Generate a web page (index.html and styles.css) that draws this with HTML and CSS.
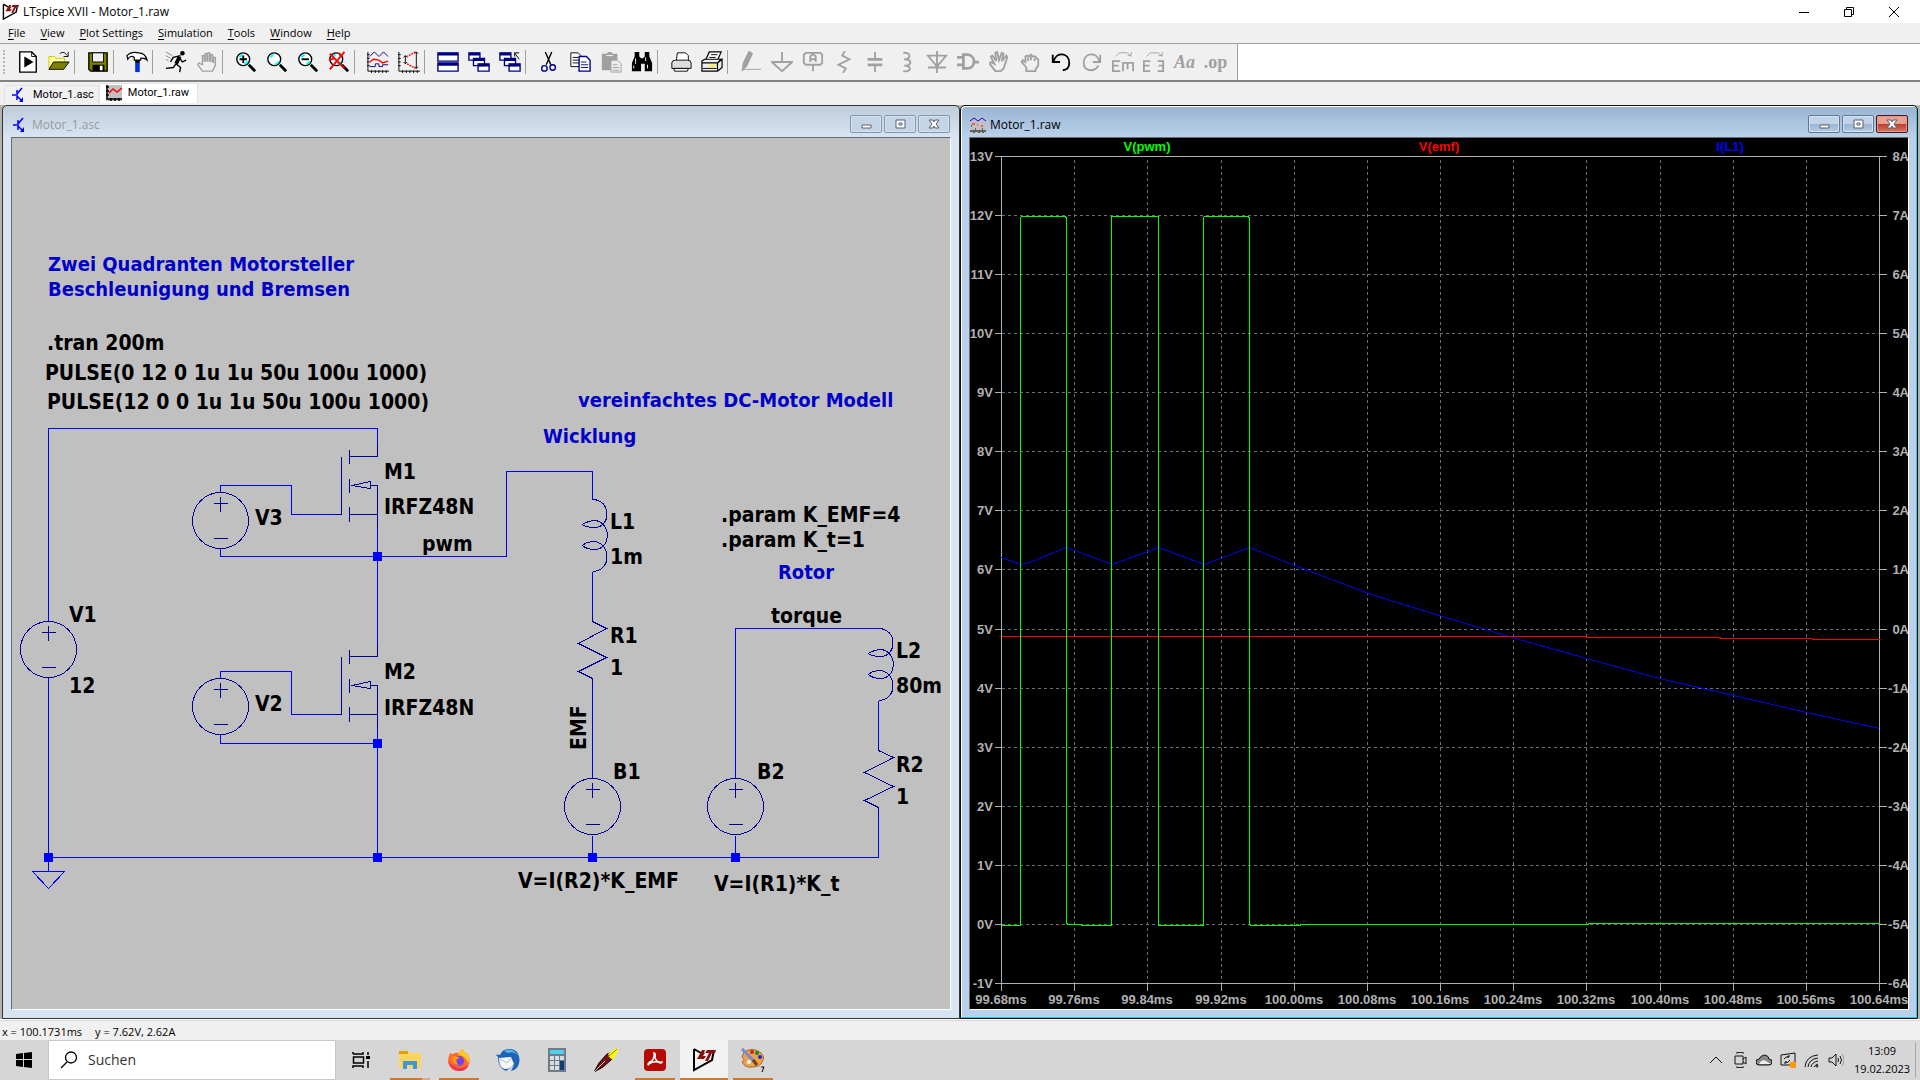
FILE: index.html
```html
<!DOCTYPE html>
<html lang="de">
<head>
<meta charset="utf-8">
<title>LTspice XVII - Motor_1.raw</title>
<link rel="stylesheet" href="styles.css">
</head>
<body>
<svg class="defs" aria-hidden="true">
  <defs>
    <symbol id="lt" viewBox="0 0 24 24"><path d="M2 1v21L20 12l2-10M2 1l7 4" fill="none" stroke="#000" stroke-width="2"/><path d="M10 2 5 11h7l2-3h-3l4-6zM13 2h11l-1 3h-3l-4 8h-3l4-8h-5z" fill="#8b1010"/></symbol>
    <symbol id="npn" viewBox="0 0 16 16"><path d="M1 8h4M6 3v10M6 7l5-6M6 9l5 5" fill="none" stroke="#00f" stroke-width="1.500"/><path d="M12 10v5H8z" fill="#00f"/></symbol>
    <symbol id="wave" viewBox="0 0 16 16"><path d="M0 0h16v16H0z" fill="#c0c0c0"/><path d="M1 0v14h15M0 2h3M0 6h3M0 10h3M5 13v3M9 13v3M13 13v3" fill="none" stroke="#000" stroke-width="1.500"/><path d="m3 8 4-4 4 3 5-4" fill="none" stroke="#f00" stroke-width="1.500"/></symbol>
    <symbol id="plotdoc" viewBox="0 0 16 16"><path d="M0 0h16v16H0z" fill="#c0c0c0"/><path d="m0 4 4-3 4 3 4-3 4 3" fill="none" stroke="#00f"/><path d="M2 7h3M7 8h1M11 9h2" stroke="#f00"/><path d="M0 14h16M1 9h1M5 12h1M12 12h1M4 15v1M9 15v1M13 15v1" stroke="#000"/></symbol>
    <symbol id="lens" viewBox="0 0 24 24"><circle cx="9" cy="9" r="7" fill="#fff" stroke="#000" stroke-width="1.500"/><path d="M5 7c1-2 2-2 3-3M10 14c2 0 3-1 4-3" stroke="#0ff" stroke-width="2" fill="none"/><path d="m15 15 7 7" stroke="#000" stroke-width="3"/></symbol>
    <symbol id="hand" viewBox="0 0 24 24"><path d="M7 22 2 15l1-2 4 2V5h2v6h1V3h2v8h1V2h2v9h1V4h2v8h1V7h2v9l-3 6z" fill="#f0f0f0" stroke="#a0a0a0" stroke-width="1.500"/></symbol>
    <symbol id="casc" viewBox="0 0 24 24"><g fill="#fff" stroke="#000080" stroke-width="1.500"><path d="M1 2h12v8H1zM6 8h12v8H6zM11 14h12v8H11z"/></g><path d="M1 2h12v3H1zM6 8h12v3H6zM11 14h12v3H11z" fill="#000080"/></symbol>
    <symbol id="source" viewBox="-30 -30 60 60" overflow="visible"><circle cy="-1" r="28" fill="none"/><path d="M-7-18H7M0-25V-10M-7 17H7"/></symbol>
    <symbol id="coil" viewBox="0 0 40 73" overflow="visible"><path d="M10 0C29 0 29 28 12 28Q4 28 0 25Q4 22 12 21C29 22 29 50 12 50Q4 50 0 46Q4 42 12 42C29 44 29 72 10 72" fill="none"/></symbol>
  </defs>
</svg>

<div class="app">
  <header class="titlebar">
    <svg class="app-icon"><use href="#lt"/></svg>
    <h1>LTspice XVII - Motor_1.raw</h1>
    <div class="sys">
      <button aria-label="Minimieren"><svg width="10" height="10" viewBox="0 0 10 10"><path d="M0 5.500h10"/></svg></button>
      <button aria-label="Wiederherstellen"><svg width="10" height="10" viewBox="0 0 10 10"><path d="M.5 2.500h7v7h-7zM2.500 2.500v-2h7v7h-2"/></svg></button>
      <button aria-label="Schließen"><svg width="10" height="10" viewBox="0 0 10 10"><path d="m0 0 10 10M10 0 0 10"/></svg></button>
    </div>
  </header>

  <nav class="menu">
    <button><u>F</u>ile</button><button><u>V</u>iew</button><button><u>P</u>lot Settings</button><button><u>S</u>imulation</button><button><u>T</u>ools</button><button><u>W</u>indow</button><button><u>H</u>elp</button>
  </nav>

  <div class="toolrow">
    <div class="toolbar" role="toolbar">
      <button aria-label="New"><svg viewBox="0 0 24 24"><path d="M3 1h13l5 5v17H3z" fill="#fff" stroke="#000" stroke-width="1.500"/><path d="M16 1v5h5" fill="none" stroke="#000"/><path d="m8 6 10 6-10 6z"/></svg></button>
      <button aria-label="Open"><svg viewBox="0 0 24 24"><path d="M1 19V6h6l2 2h9v4" fill="#ff9" stroke="#cc0"/><path d="m1 20 5-8h17l-6 8z" fill="#808000" stroke="#000"/><path d="M13 3c3-3 6-1 8 2m1-4v5h-5" fill="none" stroke="#000"/></svg></button>
      <i></i>
      <button aria-label="Save"><svg viewBox="0 0 24 24"><path d="M2 2h20v20H4l-2-2z" fill="#808000" stroke="#000" stroke-width="1.500"/><path d="M6 2h12v10H6z" fill="#f0f0f0" stroke="#000"/><path d="M6 15h13v7H6z"/><path d="M14 16h3v5h-3z" fill="#fff"/></svg></button>
      <i></i>
      <button aria-label="Control Panel"><svg viewBox="0 0 24 24"><path d="M1 5q5-5 13-3 7 0 9 8-3-3-7-2v2H9V7Q5 4 2 9z" fill="#fff" stroke="#000" stroke-width="1.300"/><path d="M10 10h5v3h-5z"/><path d="M10 13h5v10h-5z" fill="#0033dd"/></svg></button>
      <i></i>
      <button aria-label="Run"><svg viewBox="0 0 24 24"><circle cx="19" cy="2.500" r="2.500"/><path d="M16 6l-4 8" stroke="#000" stroke-width="4"/><path d="M17 5 9 7l-3 5M12 14l5 4-1 5M12 14l-3 4-8 1M16 8l3 4 4-2" fill="none" stroke="#000" stroke-width="1.500"/><path d="M1 1l7 4M1 5l5 3M1 9l3 2" stroke="#888"/></svg></button>
      <button aria-label="Halt"><svg><use href="#hand"/></svg></button>
      <i></i>
      <button aria-label="Zoom area"><svg viewBox="0 0 24 24"><use href="#lens"/><path d="M5 9h8M9 5v8" stroke="#000" stroke-width="2"/></svg></button>
      <button aria-label="Pan"><svg><use href="#lens"/></svg></button>
      <button aria-label="Zoom back"><svg viewBox="0 0 24 24"><use href="#lens"/><path d="M5 9h8" stroke="#000" stroke-width="2"/></svg></button>
      <button aria-label="Zoom full extents"><svg viewBox="0 0 24 24"><use href="#lens"/><path d="m2 3 16 16M18 1 2 20M1 10l6-2M12 2l2 4" stroke="#f00" stroke-width="2"/></svg></button>
      <i></i>
      <button aria-label="Autorange"><svg viewBox="0 0 24 24"><path d="M1 1v21h23M0 4h3M0 8h3M0 12h3M0 16h3M5 21v3M9 21v3M13 21v3M17 21v3M21 21v3" fill="none" stroke="#000"/><path d="m3 6 5-5 5 5 5-5 5 5M3 17h6v-3h4v3h4v-2h6" fill="none" stroke="#000080"/><path d="m3 12 4-3 6 1 4 3 6-2" fill="none" stroke="#f00" stroke-width="1.500"/></svg></button>
      <button aria-label="Manual limits"><svg viewBox="0 0 24 24"><path d="M1 1v21h23M0 4h3M0 8h3M0 12h3M0 16h3M5 21v3M9 21v3M13 21v3M17 21v3M21 21v3M8 5v9m-2-7 2-2 2 2m-4 5 2 2 2-2M20 1v18m-2-16 2-2 2 2m-4 14 2 2 2-2" fill="none" stroke="#000"/><path d="m19 1-9 5M10 14l9 5" fill="none" stroke="#f00" stroke-width="1.500" stroke-dasharray="2 1"/></svg></button>
      <i></i>
      <button aria-label="Tile"><svg viewBox="0 0 24 24"><path d="M1 2h22v9H1zM1 13h22v9H1z" fill="#fff" stroke="#000080" stroke-width="1.500"/><path d="M1 2h22v3H1zM1 13h22v3H1z" fill="#000080"/></svg></button>
      <button aria-label="Cascade"><svg><use href="#casc"/></svg></button>
      <button aria-label="Close all"><svg viewBox="0 0 24 24"><use href="#casc"/><path d="m22 9-5-7m0 4V2h5" fill="none" stroke="#000"/></svg></button>
      <i></i>
      <button aria-label="Cut"><svg viewBox="0 0 24 24"><path d="m8 1 6 14M15 1 9 15" stroke="#000" stroke-width="1.500"/><circle cx="7" cy="19" r="3" fill="none" stroke="#000080" stroke-width="1.500"/><circle cx="16" cy="18" r="3" fill="none" stroke="#000080" stroke-width="1.500"/></svg></button>
      <button aria-label="Copy"><svg viewBox="0 0 24 24"><path d="M2 2h8l4 4v11H2z" fill="#fff" stroke="#000"/><path d="M4 7h6M4 10h8M4 13h8" stroke="#000"/><path d="M11 6h8l4 4v12H11z" fill="#fff" stroke="#000080" stroke-width="1.500"/><path d="M13 12h6M13 15h8M13 18h8" stroke="#000080"/></svg></button>
      <button aria-label="Paste"><svg viewBox="0 0 24 24"><path d="M2 3h5l2-2h3l2 2h5v18H2z" fill="#a0a0a0"/><path d="M7 5h7" stroke="#fff"/><path d="M12 10h7l4 4v9H12z" fill="#eee" stroke="#a0a0a0"/><path d="M14 15h5M14 18h7M14 21h7" stroke="#a0a0a0"/></svg></button>
      <button aria-label="Find"><svg viewBox="0 0 24 24"><path d="M4 1h5v5l2 2h2l2-2V1h5v5l3 7v9h-8v-8h-4v8H1v-9l3-7z"/><path d="M5 8v6M3 16v3M16 7v4M18 15v4" stroke="#fff"/></svg></button>
      <i></i>
      <button aria-label="Print"><svg viewBox="0 0 24 24"><path d="m7 10 1-8h9l3 3v5" fill="#fff" stroke="#000"/><path d="M2 13q0-3 4-3h13q4 0 4 3v6H2z" fill="#ddd" stroke="#000"/><path d="M4 19h16l-1 3H5z" fill="#fff" stroke="#000"/></svg></button>
      <button aria-label="Print setup"><svg viewBox="0 0 24 24"><path d="m5 10 4-9h13l-4 9" fill="#fff" stroke="#000" stroke-width="1.300"/><path d="M11 4h7M9 7h7" stroke="#000"/><path d="m1 11 3-2h18l-4 4v9H1zM18 13l5-4v9l-5 4M1 13h17" fill="#eee" stroke="#000" stroke-width="1.300"/><path d="M9 16h7" stroke="#ff0" stroke-width="2"/><path d="M2 19h15" stroke="#000"/></svg></button>
      <i></i>
      <button class="off" aria-label="Wire"><svg viewBox="0 0 24 24"><path d="m3 20 1-7 6-12 3 2-6 13z" fill="#a0a0a0"/><path d="m3 21 3-1h17" stroke-width="1"/></svg></button>
      <button class="off" aria-label="Ground"><svg viewBox="0 0 24 24"><path d="M12 1v11M1 12h22L12 22z"/></svg></button>
      <button class="off" aria-label="Label net"><svg viewBox="0 0 24 24"><path d="M4 2h16l2 2v9l-2 2H4l-2-2V4zM12 15v7M9 12V6l2-2h2l2 2v6M9 9h6"/></svg></button>
      <button class="off" aria-label="Resistor"><svg viewBox="0 0 24 24"><path d="m13 0-3 5 8 4-12 6 8 4-3 5"/></svg></button>
      <button class="off" aria-label="Capacitor"><svg viewBox="0 0 24 24"><path d="M12 1v9M12 15v8"/><path d="M4 9h16M4 15h16" stroke-width="3"/></svg></button>
      <button class="off" aria-label="Inductor"><svg viewBox="0 0 24 24"><path d="M9 2c9-1 9 7 1 7 9 0 9 7 0 7 9 0 8 7-1 6"/></svg></button>
      <button class="off" aria-label="Diode"><svg viewBox="0 0 24 24"><path d="M12 0v24M2 5h20L12 17zM2 18h20"/></svg></button>
      <button class="off" aria-label="Component"><svg viewBox="0 0 24 24"><path d="M7 4h4c10 0 10 15 0 15H7zM0 7h7M0 15h7M18 12h6" stroke-width="3"/></svg></button>
      <button class="off" aria-label="Move"><svg viewBox="0 0 24 24"><path d="m8 22-6-8 1-2 4 2-4-8 2-1 4 6-1-9 2-1 2 9 3-8 2 1-2 8 5-6 1 2-4 12-3 3z"/></svg></button>
      <button class="off" aria-label="Drag"><svg viewBox="0 0 24 24"><path d="M8 22v-4l-5-6 1-2 3 2V6l2-1 2 1 2-2 2 2 3 0 1 2 2 1v7l-3 4v2z M10 7v4M13 6v4M17 8v3"/></svg></button>
      <button aria-label="Undo"><svg viewBox="0 0 24 24"><path d="M3 4v8h8M4 11C7 0 21 2 21 13q0 7-7 8" fill="none" stroke="#000" stroke-width="2"/></svg></button>
      <button class="off" aria-label="Redo"><svg viewBox="0 0 24 24"><path d="M21 4v8h-8M20 11C17 0 3 2 3 13q0 8 9 8 5-1 7-5"/></svg></button>
      <button class="off" aria-label="Mirror"><svg viewBox="0 0 24 24"><path d="M9 11H1v11h8M1 16h6M12 22v-9h11v9M17 13v7"/><path d="m4 6 4-4h9l4 4m-4-1h4V1" stroke-width="1"/></svg></button>
      <button class="off" aria-label="Rotate"><svg viewBox="0 0 24 24"><path d="M8 11H1v11h7M1 16h6M16 11h6v11h-6M17 16h5"/><path d="m4 6 4-4h9l4 4m-4-1h4V1" stroke-width="1"/></svg></button>
      <button class="off txt aa">Aa</button>
      <button class="off txt">.op</button>
    </div>
  </div>

  <nav class="tabs">
    <a href="#asc" class="tab"><svg><use href="#npn"/></svg>Motor_1.asc</a>
    <a href="#raw" class="tab active"><svg><use href="#wave"/></svg>Motor_1.raw</a>
  </nav>

  <main class="workspace">
    <section class="win" id="asc">
      <header><svg><use href="#npn"/></svg><h2>Motor_1.asc</h2>
        <div class="ctl">
          <button aria-label="Minimieren"><svg viewBox="0 0 12 12"><path d="M2 7h9v3H2z"/></svg></button>
          <button aria-label="Maximieren"><svg viewBox="0 0 12 12"><path d="M2 2h9v8H2zM5 5h3v2H5z"/></svg></button>
          <button aria-label="Schließen"><svg viewBox="0 0 12 12"><path d="M1 2h4l1 2 1-2h4L8 6l3 4H7L6 8l-1 2H1l3-4z"/></svg></button>
        </div>
      </header>
      <div class="client">
        <svg class="schematic" viewBox="12 138 938 871" preserveAspectRatio="xMinYMin meet">
          <g transform="translate(.5 .5)" shape-rendering="crispEdges" fill="none">
            <g class="wire">
              <path d="M48 620V428H377V450M220 492V485H291V514H335M220 547V556H506V471H592V499M377 528V650M48 677V871M48 857H878V806M220 678V671H291V714H335M220 733V743H377M377 728V857M592 571V614M592 685V778M592 835V857M735 835V857M735 778V628H878M878 700V743"/>
              <path d="M32 871H64L48 888z"/>
            </g>
            <g class="part">
              <g id="fet"><path d="M377 442V456H349M349 449V463M349 478V492M349 506V521M341 456V514H335M349 514H377M351 485 370 481V488zM370 485H377V528"/></g>
              <use href="#fet" y="200"/>
              <use href="#source" x="18" y="620" width="60" height="60"/>
              <use href="#source" x="190" y="491" width="60" height="60"/>
              <use href="#source" x="190" y="677" width="60" height="60"/>
              <use href="#source" x="562" y="777" width="60" height="60"/>
              <use href="#source" x="705" y="777" width="60" height="60"/>
              <use href="#coil" x="582" y="499" width="40" height="73"/>
              <use href="#coil" x="868" y="628" width="40" height="73"/>
              <path d="M592 614V621L606 628 578 643 606 657 578 671 592 678V685M878 743V750L893 757 864 772 893 786 864 800 878 807V814"/>
            </g>
          </g>
          <path class="node" d="M373 552h9v9h-9zM373 739h9v9h-9zM44 853h9v9h-9zM373 853h9v9h-9zM588 853h9v9h-9zM731 853h9v9h-9z"/>
          <g class="note">
            <text x="48" y="271">Zwei Quadranten Motorsteller</text><text x="48" y="296">Beschleunigung und Bremsen</text>
            <text x="578" y="407">vereinfachtes DC-Motor Modell</text><text x="543" y="443">Wicklung</text><text x="778" y="579">Rotor</text>
          </g>
          <g class="label">
            <text x="47" y="350">.tran 200m</text><text x="45" y="380">PULSE(0 12 0 1u 1u 50u 100u 1000)</text><text x="47" y="409">PULSE(12 0 0 1u 1u 50u 100u 1000)</text>
            <text x="384" y="479">M1</text><text x="384" y="514">IRFZ48N</text><text x="255" y="525">V3</text><text x="422" y="551">pwm</text>
            <text x="69" y="622">V1</text><text x="69" y="693">12</text><text x="255" y="711">V2</text><text x="384" y="679">M2</text><text x="384" y="715">IRFZ48N</text>
            <text x="610" y="529">L1</text><text x="610" y="564">1m</text><text x="610" y="643">R1</text><text x="610" y="675">1</text>
            <text x="721" y="522">.param K_EMF=4</text><text x="721" y="547">.param K_t=1</text><text x="771" y="623">torque</text>
            <text x="896" y="658">L2</text><text x="896" y="693">80m</text><text x="896" y="772">R2</text><text x="896" y="804">1</text>
            <text x="613" y="779">B1</text><text x="757" y="779">B2</text><text x="518" y="888">V=I(R2)*K_EMF</text><text x="714" y="891">V=I(R1)*K_t</text>
            <text transform="translate(586 750) rotate(-90)">EMF</text>
          </g>
        </svg>
      </div>
    </section>

    <section class="win focus" id="raw">
      <header><svg><use href="#plotdoc"/></svg><h2>Motor_1.raw</h2>
        <div class="ctl">
          <button aria-label="Minimieren"><svg viewBox="0 0 12 12"><path d="M2 7h9v3H2z"/></svg></button>
          <button aria-label="Maximieren"><svg viewBox="0 0 12 12"><path d="M2 2h9v8H2zM5 5h3v2H5z"/></svg></button>
          <button class="close" aria-label="Schließen"><svg viewBox="0 0 12 12"><path d="M1 2h4l1 2 1-2h4L8 6l3 4H7L6 8l-1 2H1l3-4z"/></svg></button>
        </div>
      </header>
      <div class="client">
        <svg class="plot" viewBox="970 138 938 871" preserveAspectRatio="xMinYMin meet">
          <g transform="translate(.5 .5)" shape-rendering="crispEdges" fill="none">
            <path class="grid" d="M1001 215H1879M1001 274H1879M1001 333H1879M1001 392H1879M1001 451H1879M1001 510H1879M1001 569H1879M1001 629H1879M1001 688H1879M1001 747H1879M1001 806H1879M1001 865H1879M1001 924H1879M1074 159V983M1147 159V983M1221 159V983M1294 159V983M1367 159V983M1440 159V983M1513 159V983M1586 159V983M1660 159V983M1733 159V983M1806 159V983"/>
            <path class="axis" d="M994 156H1886M994 983H1886M1001 156V990M1879 156V990M994 215h7M994 274h7M994 333h7M994 392h7M994 451h7M994 510h7M994 569h7M994 629h7M994 688h7M994 747h7M994 806h7M994 865h7M994 924h7M1879 215h7M1879 274h7M1879 333h7M1879 392h7M1879 451h7M1879 510h7M1879 569h7M1879 629h7M1879 688h7M1879 747h7M1879 806h7M1879 865h7M1879 924h7M1074 983v7M1147 983v7M1221 983v7M1294 983v7M1367 983v7M1440 983v7M1513 983v7M1586 983v7M1660 983v7M1733 983v7M1806 983v7"/>
            <path class="il" d="M1001 557 1020 564 1029 562 1066 547 1112 564 1158 547 1204 564 1249 547 1294 565 1371 594 1445 617 1512 637 1586 658 1659 678 1733 695 1806 712 1879 728"/>
            <path class="emf" d="M1001 636H1586V637H1720V638H1812V639H1879"/>
            <path class="pwm" d="M1001 925H1020V217L1021 216H1065L1066 218V922L1067 924H1081V925H1111V216H1158V925H1203V217L1204 216H1248L1249 218V924L1251 925H1300V924H1588V923H1879"/>
          </g>
          <g class="names"><text class="c-pwm" x="1147" y="151">V(pwm)</text><text class="c-emf" x="1439" y="151">V(emf)</text><text class="c-il" x="1730" y="151">I(L1)</text></g>
          <g class="ticks end">
            <text x="993" y="161">13V</text><text x="993" y="220">12V</text><text x="993" y="279">11V</text><text x="993" y="338">10V</text><text x="993" y="397">9V</text><text x="993" y="456">8V</text><text x="993" y="515">7V</text><text x="993" y="574">6V</text><text x="993" y="634">5V</text><text x="993" y="693">4V</text><text x="993" y="752">3V</text><text x="993" y="811">2V</text><text x="993" y="870">1V</text><text x="993" y="929">0V</text><text x="993" y="988">-1V</text>
            <text x="1909" y="161">8A</text><text x="1909" y="220">7A</text><text x="1909" y="279">6A</text><text x="1909" y="338">5A</text><text x="1909" y="397">4A</text><text x="1909" y="456">3A</text><text x="1909" y="515">2A</text><text x="1909" y="574">1A</text><text x="1909" y="634">0A</text><text x="1909" y="693">-1A</text><text x="1909" y="752">-2A</text><text x="1909" y="811">-3A</text><text x="1909" y="870">-4A</text><text x="1909" y="929">-5A</text><text x="1909" y="988">-6A</text>
          </g>
          <g class="ticks">
            <text x="1001" y="1004">99.68ms</text><text x="1074" y="1004">99.76ms</text><text x="1147" y="1004">99.84ms</text><text x="1221" y="1004">99.92ms</text><text x="1294" y="1004">100.00ms</text><text x="1367" y="1004">100.08ms</text><text x="1440" y="1004">100.16ms</text><text x="1513" y="1004">100.24ms</text><text x="1586" y="1004">100.32ms</text><text x="1660" y="1004">100.40ms</text><text x="1733" y="1004">100.48ms</text><text x="1806" y="1004">100.56ms</text><text x="1879" y="1004">100.64ms</text>
          </g>
        </svg>
      </div>
    </section>
  </main>

  <footer class="status"><span>x = 100.1731ms</span><span>y = 7.62V, 2.62A</span></footer>

  <div class="taskbar">
    <button class="start" aria-label="Start"><svg width="16" height="16" viewBox="0 0 16 16"><path d="M0 2l7-1v6H0zM8 1l8-1v7H8zM0 8h7v7l-7-1zM8 8h8v8l-8-1z"/></svg></button>
    <label class="search"><svg width="18" height="18" viewBox="0 0 18 18"><circle cx="11" cy="6.500" r="5.500" fill="none" stroke="#000" stroke-width="1.300"/><path d="m7 11-6 6" stroke="#000" stroke-width="1.300"/></svg><input type="text" placeholder="Suchen" aria-label="Suchen"></label>
    <div class="apps">
      <button aria-label="Taskansicht"><svg viewBox="0 0 24 24"><path d="M4 6V4M4 6h10V4M4.500 9h10v6h-10zM4 20v-2h10v2M19 4v3M19 13v7" fill="none" stroke="#000" stroke-width="1.500"/><path d="M17 8h4v3h-4z"/></svg></button>
      <button class="run more" aria-label="Explorer"><svg viewBox="0 0 24 24"><path d="M1 3h9l2 2h11v15H1z" fill="#ffd35c"/><path d="M1 3h9v3H1z" fill="#e0a000"/><path d="M5 13h14v8h-4v-4H9v4H5z" fill="#3a96dd"/></svg></button>
      <button class="run" aria-label="Firefox"><svg viewBox="0 0 24 24"><path d="M3 5q1 1 3 1 3-2 6-1 2-1 2-4 3 1 4 5l2-1q4 6 2 11-3 7-10 7-9 0-11-9 0-5 2-9z" fill="#ff6a28"/><path d="M14 1q3 1 4 5l2-1q4 6 1 10-3-8-10-8z" fill="#ffc820"/><path d="M1 13q3 10 12 10 6 0 9-6-5 4-10 3-5-1-11-7z" fill="#f0325a"/><circle cx="12" cy="13" r="5" fill="#7542e5"/><path d="M5 9q4-2 8 1l-3 1q-2 3 2 6-7 0-7-8z" fill="#ff980e"/></svg></button>
      <button aria-label="Thunderbird"><svg viewBox="0 0 24 24"><path d="M2 9 0 7q2-1 4 0Q6 1 13 1q7 0 9 5 3 6 0 12-2 4-7 5l3-6-8 6Q2 20 2 9z" fill="#1f63b5"/><path d="M8 3q8-4 14 4-5-4-10-2z" fill="#56b7f0"/><path d="m3 10 12-1 3 7q-3 5-9 5-6-1-6-11z" fill="#f5f5fa"/><path d="m4 11 7 4 4-5" fill="none" stroke="#b9bccb"/></svg></button>
      <button aria-label="Rechner"><svg viewBox="0 0 24 24"><path d="M3 0h18v24H3z" fill="#6f7c88"/><path d="M5 2h14v4H5z" fill="#4fd0f0"/><path d="M5 8h4v4H5zM10 8h4v4h-4zM15 8h4v4h-4zM5 13h4v4H5zM10 13h4v4h-4zM5 18h4v4H5zM10 18h4v4h-4z" fill="#d8dde2"/><path d="M15 13h4v9h-4z" fill="#123c7a"/></svg></button>
      <button aria-label="Feder"><svg viewBox="0 0 24 24"><path d="m0 24 5-9 8-9 6-2-1 7-9 8z" fill="#7a1010" stroke="#000"/><path d="m0 24 11-11" stroke="#ccc"/><path d="m14 6 8-6h2v3l-5 9-3-2z" fill="#ff0"/><path d="m14 9 9-8" stroke="#777"/></svg></button>
      <button class="run" aria-label="Acrobat"><svg viewBox="0 0 24 24"><rect x="1" y="1" width="22" height="22" rx="4" fill="#b30b00"/><path d="M11 5q2 0 1 5 2 5 7 4 0 2-4 0-5-1-9 2-1 2-1 0 2-3 4-3 3-5 2-8z" fill="none" stroke="#fff" stroke-width="1.500"/></svg></button>
      <button class="run current" aria-label="LTspice"><svg><use href="#lt"/></svg></button>
      <button class="run" aria-label="Paint"><svg viewBox="0 0 24 24"><path d="M3 4q8-5 16 0 6 5 2 10-2 5-10 5-7 1-10-5 4-1 0-5z" fill="#e8a452" stroke="#a86820"/><circle cx="11" cy="4" r="2" fill="#c22"/><circle cx="16" cy="5" r="2" fill="#1a8a2a"/><circle cx="19" cy="9" r="2" fill="#22d"/><circle cx="17" cy="13" r="2" fill="#fa0"/><circle cx="8" cy="14" r="2" fill="#fff"/><path d="m1 1 13 13" stroke="#758ad0" stroke-width="3"/><path d="m12 12 4 5" stroke="#753b22" stroke-width="3"/><path d="M20 19h3l-2 5" fill="none" stroke="#000"/></svg></button>
    </div>
    <div class="tray">
      <svg viewBox="0 0 16 16"><path d="m2 11 6-6 6 6"/></svg>
      <svg viewBox="0 0 16 16"><path d="M3 4h8v8H3zM11 7l3-2v7l-3-2M4 1q4-1.500 8 0M4 15q4 1.500 8 0"/></svg>
      <svg viewBox="0 0 16 16"><path d="M3 13Q0 13 0 10q0-3 3-3 2-4 6-4 4 1 4 4 3 0 3 3t-3 3z" fill="#888"/><path d="M3 12q1-3 5-4l7 4z" fill="#eee" stroke="none"/></svg>
      <svg viewBox="0 0 16 16"><path d="m1 3 14-2v12H1zM4 7q2-3 5-2M10 8q-2 4-5 2M9 3v2H7M5 12v-2h2"/><circle cx="13" cy="13" r="3.500" fill="#ff9900" stroke="none"/></svg>
      <svg viewBox="0 0 16 16"><path d="M1 15Q2 4 14 3M4 15q1-8 10-9M7 15q1-5 7-6M10 15q1-2 4-3"/><circle cx="13" cy="14" r="1"/></svg>
      <svg viewBox="0 0 16 16"><path d="M1 6h3l4-4v12l-4-4H1zM10 6q1 2 0 4M12 4q3 4 0 8"/><path d="M14 2q4 6 0 12" stroke="#999"/></svg>
      <time class="clock"><span>13:09</span><span>19.02.2023</span></time>
    </div>
  </div>
</div>
</body>
</html>
```
FILE: styles.css
```css
* { box-sizing: border-box; }
body { margin: 0; font: 12px/16px "Open Sans", "Noto Sans", sans-serif; color: #000; background: #f0f0f0; }
button { margin: 0; padding: 0; border: 0; background: none; font: inherit; color: inherit; }
h1, h2 { margin: 0; font: inherit; }
svg { display: block; }
.defs { position: absolute; width: 0; height: 0; }
.app { display: flex; flex-direction: column; min-height: 100vh; }

.titlebar { display: flex; align-items: center; height: 23px; padding: 0 4px 0 2px; background: #fff; }
.app-icon { width: 17px; height: 18px; margin-right: 4px; }
.sys { display: flex; margin-left: auto; }
.sys button { display: grid; place-items: center; width: 45px; height: 20px; }
.sys svg { fill: none; stroke: #000; }

.menu { display: flex; gap: 15px; height: 21px; padding-left: 8px; border-bottom: 1px solid #a0a0a0; font-size: 11px; }
.menu u { text-underline-offset: 2px; }

.toolrow { display: flex; height: 38px; border-bottom: 2px solid #828282; background: #fff; }
.toolbar { display: flex; align-items: center; gap: 0; padding: 0 6px 0 3px; background: #f0f0f0; border-right: 1px solid #a0a0a0; }
.toolbar::before { content: ""; width: 7px; height: 24px; border-left: 2px dotted #b8b8b8; }
.toolbar button { display: grid; place-items: center; width: 31px; height: 36px; }
.toolbar svg { width: 22px; height: 22px; }
.toolbar i { width: 8px; height: 24px; border-left: 1px solid #a0a0a0; }
.toolbar .off svg { fill: none; stroke: #a0a0a0; stroke-width: 2; }
.toolbar .txt { color: #a0a0a0; font: bold 18px/22px "Liberation Serif", serif; }
.toolbar .aa { font-style: italic; }

.tabs { display: flex; align-items: flex-end; height: 23px; padding: 0 4px 2px; font: 11px/16px Roboto, sans-serif; }
.tab { display: flex; align-items: center; gap: 6px; height: 18px; padding: 0 4px 0 6px; color: #000; text-decoration: none; border: 1px solid #e3e3e3; border-bottom: 0; }
.tab svg { width: 16px; height: 16px; }
.tab.active { height: 20px; padding: 0 8px 2px 6px; background: #fff; }

.workspace { flex: 1; display: grid; grid-template-columns: 1fr 1fr; padding: 0 2px; background: #b4b4ac; }
.win { display: flex; flex-direction: column; min-width: 0; padding: 0 8px 8px; border: 1px solid #333; border-radius: 5px 5px 0 0; background: linear-gradient(#bfcddb, #d7e4f2 31px); }
.win.focus { border-color: #111; background: linear-gradient(#99b4d1, #b9d1ea 31px); box-shadow: inset -1px -1px #2cc5e8, inset 1px 1px #fff; }
.win header { display: flex; align-items: center; height: 31px; padding: 7px 1px 0; }
.win header > svg { width: 16px; height: 16px; margin-right: 4px; }
.win h2 { color: #9a9a9a; }
.win.focus h2 { color: #000; }
.ctl { display: flex; gap: 2px; margin-left: auto; padding-bottom: 3px; }
.ctl button { display: grid; place-items: center; width: 32px; height: 18px; border: 1px solid #8496ad; border-radius: 2px; background: #c6d5e5; box-shadow: inset 0 0 0 1px #d5e2ef; }
.ctl svg { width: 12px; height: 12px; fill: #fff; stroke: #556070; }
.focus .ctl button { border-color: #5f7896; background: linear-gradient(#c0d3e8 50%, #9bb6d2 50%, #b4cbe2); }
.focus .ctl .close { border-color: #4c1520; background: linear-gradient(#e5a092 50%, #bb3c28 50%, #d97863); box-shadow: inset 0 0 0 1px #e0998c; }
.client { flex: 1; min-height: 0; display: grid; overflow: hidden; background: #c0c0c0; border: 1px solid #6d6d6d; border-right-color: #fff; border-bottom-color: #fff; }
.focus .client { background: #000; }
.client svg { width: 100%; height: 100%; min-height: 0; }

.wire { stroke: #0000ff; }
.part { stroke: #000096; }
.node { fill: #0000ff; }
.schematic text { font: bold 21px "DejaVu Sans Condensed", "Noto Sans", sans-serif; }
.schematic .note text { font-size: 20px; fill: #0000c8; }
.plot text { font: bold 13px "Liberation Sans", Arial, sans-serif; text-anchor: middle; }
.ticks { fill: #b0b0b0; }
.plot .end text { text-anchor: end; }
.grid { stroke: #6e6e6e; stroke-dasharray: 3 3; }
.axis { stroke: #b0b0b0; }
.il { stroke: #0000e0; }
.emf { stroke: #ff0000; }
.pwm { stroke: #00ff00; }
.c-pwm { fill: #00ff00; }
.c-emf { fill: #ff0000; }
.c-il { fill: #0000ff; }

.status { display: flex; gap: 13px; height: 21px; padding: 4px 2px 0; border-top: 1px solid #fff; box-shadow: inset 0 1px #d8d8d8; font-size: 11px; }

.taskbar { display: flex; height: 40px; background: #d6d6d6; }
.start { display: grid; place-items: center; width: 48px; }
.search { display: flex; align-items: center; gap: 10px; width: 288px; padding-left: 11px; background: #fff; border: 1px solid #c8c8c8; }
.search input { flex: 1; min-width: 0; border: 0; padding: 0; outline: 0; background: none; font: 14px/20px "Open Sans", sans-serif; }
.search input::placeholder { color: #333; opacity: 1; }
.apps { display: flex; gap: 1px; padding-left: 1px; }
.apps button { display: grid; place-items: center; width: 48px; height: 40px; }
.apps svg { width: 24px; height: 24px; }
.apps .run { background: linear-gradient(#cc7832, #cc7832) center bottom / 40px 2px no-repeat; }
.apps .more { background: linear-gradient(90deg, #cc7832 32px, #e2a983 32px) center bottom / 40px 2px no-repeat; }
.apps .current { background: linear-gradient(#cc7832, #cc7832) center bottom / 48px 2px no-repeat #f2f2f2; }
.tray { display: flex; align-items: center; gap: 8px; margin-left: auto; padding-right: 4px; }
.tray svg { width: 16px; height: 16px; fill: none; stroke: #111; }
.clock { display: flex; flex-direction: column; align-items: center; width: 64px; padding-right: 3px; border-right: 1px solid #a8a8a8; font-size: 11px; line-height: 18px; }
```
